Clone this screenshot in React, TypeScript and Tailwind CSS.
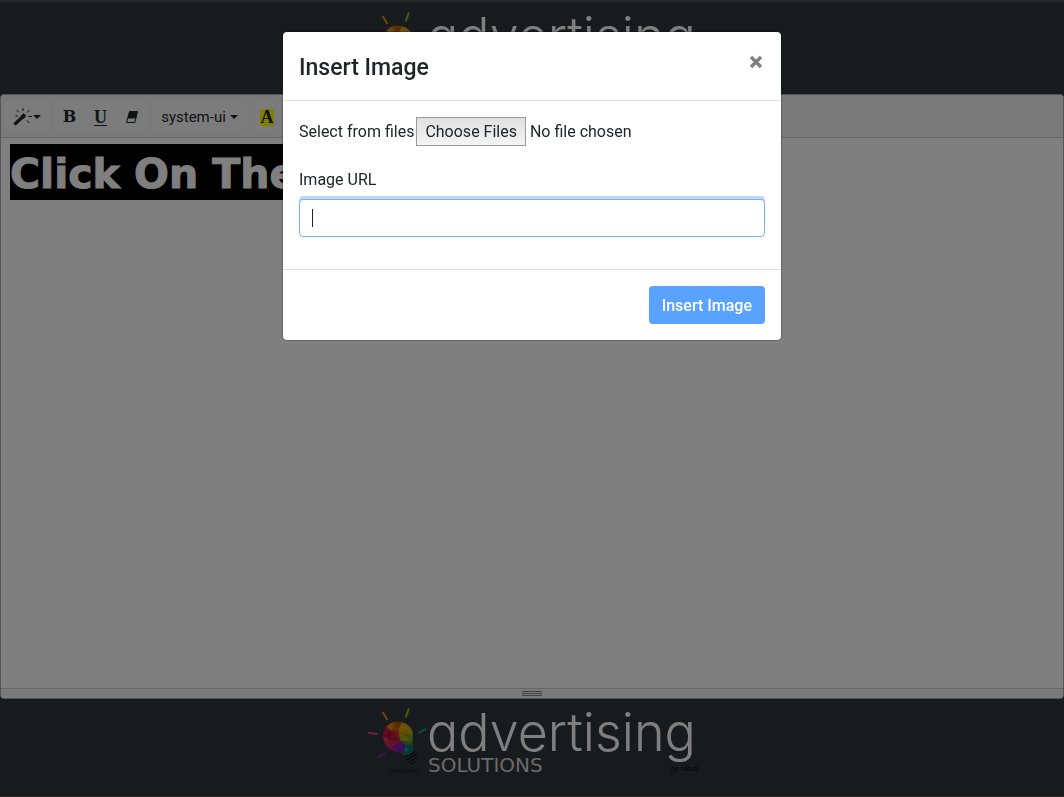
import type { ReactNode } from "react";

function Logo() {
  return (
    <svg viewBox="0 0 330 68" width="330" height="68" role="img" aria-label="advertising SOLUTIONS" className="shrink-0 overflow-visible">
      <g strokeWidth="2" fill="none">
        <path d="M0 24.7 9.5 26" stroke="#d84a78" />
        <path d="M14.7 4 19.3 12" stroke="#e08a16" />
        <path d="M41 .3 37.7 9.3" stroke="#8fae18" />
        <path d="M50 25.3 58.3 20.7" stroke="#128c8c" />
        <path d="M9.3 49.7 17.3 45" stroke="#7a2aa4" />
      </g>
      <ellipse cx="36" cy="62.7" rx="16" ry="2.4" fill="#262b30" />
      <path d="M36 48 46 43 50 50 48 54 43 56.500 39 54Z" fill="#1b1d20" />
      <path d="M37 51 47 45.500M38.500 53.500 48.500 48M41 56 49.500 51" stroke="#4b4f53" strokeWidth=".8" />
      <path d="M15 29 15.500 24 18 19 22 15.500 26 14 30 13.600 34 14.200 38 15.800 42 19 44.500 23.500 45 29 44.500 33 46 42 42 46 36.500 48 32 45 26 43.500 20 40 16.500 35Z" fill="#a31a3c" />
      <path d="M18 19 22 15.500 26 14 24 23Z" fill="#d48a12" />
      <path d="M26 14 30 13.600 34 14.200 30 22Z" fill="#b85606" />
      <path d="M26 14 30 22 24 23Z" fill="#cb6a0c" />
      <path d="M34 14.200 38 15.800 42 19 37 26 30 22Z" fill="#d9a50f" />
      <path d="M42 19 44.500 23.500 45 27 37 26Z" fill="#b8b414" />
      <path d="M45 27 44.500 34 37 26Z" fill="#76a51c" />
      <path d="M30 22 37 26 32 33Z" fill="#bf9b10" />
      <path d="M37 26 44.500 34 32 33Z" fill="#95ad1a" />
      <path d="M15 28 15.500 24 18 19 24 23Z" fill="#c81a50" />
      <path d="M24 23 30 22 32 33Z" fill="#d02a2a" />
      <path d="M15 28 24 23 22 32Z" fill="#a80f38" />
      <path d="M24 23 32 33 22 32Z" fill="#bc1634" />
      <path d="M15 28 22 32 17 36Z" fill="#d0385a" />
      <path d="M22 32 32 33 24 40 17 36Z" fill="#cd2350" />
      <path d="M32 33 38 36 36 44 32 45 28 44 24 40Z" fill="#7b1fb0" />
      <path d="M17 36 24 40 28 44 20 40Z" fill="#b0208a" />
      <path d="M32 33 44.500 34 44.500 39 38 37Z" fill="#3f8a34" />
      <path d="M38 37 44.500 37 46 42 42 46 36.500 48 34 45Z" fill="#0a7272" />
      <path d="M38 37 41 43 36 44Z" fill="#109595" />
      <text x="59" y="43" fontSize="52" fontWeight="300" fill="#fff" className="font-['Inter',sans-serif] [font-feature-settings:'cv11']">advertising</text>
      <text x="60" y="64" fontSize="20" fill="#d4d4d4" className="font-['DejaVu_Sans',sans-serif]">SOLUTIONS</text>
      <text x="303" y="63" fontSize="7" fill="#050505" className="font-['Liberation_Sans',sans-serif]">by naturl</text>
    </svg>
  );
}

function Caret() {
  return (
    <svg width="8" height="4" viewBox="0 0 8 4" aria-hidden="true">
      <path d="M0 0H8L4 4Z" fill="currentColor" />
    </svg>
  );
}

function ToolGroup({ children }: { children: ReactNode }) {
  return <div className="flex h-8 items-center rounded bg-[#f9f9f9]">{children}</div>;
}

function Toolbar() {
  return (
    <div role="toolbar" className="flex h-[43px] shrink-0 items-center gap-[5px] overflow-hidden border-b border-[#cfcfcf] bg-[#f4f4f4] px-1 pt-[2px] text-[#212529]">
      <ToolGroup>
        <button type="button" aria-label="Style" className="flex w-11 items-center justify-center">
          <svg width="20" height="20" viewBox="0 0 20 20" fill="none" stroke="currentColor" aria-hidden="true">
            <path d="M1.500 17.500 10 9.500" strokeWidth="3.200" />
            <path d="M9 10.500 12 7.500" strokeWidth="4" />
            <path d="M10 1V4M3.500 3 6 5.500M16.500 3 14 5.500M15.500 9.500H19M14 13.500 16.500 16M2.500 9H5" strokeWidth="1" />
          </svg>
          <Caret />
        </button>
      </ToolGroup>
      <ToolGroup>
        <button type="button" aria-label="Bold" className="w-[31px] font-['DejaVu_Serif',serif] text-base leading-6 font-bold">B</button>
        <button type="button" aria-label="Underline" className="w-[31px] font-['Liberation_Serif',serif] text-[18px] leading-6 font-bold underline underline-offset-2">U</button>
        <button type="button" aria-label="Remove font style" className="flex w-[31px] justify-center">
          <svg width="14" height="14" viewBox="0 0 14 14" aria-hidden="true">
            <path d="M4.500 1.500H12.500L9.800 12.500H1.500Z" fill="none" stroke="currentColor" strokeLinejoin="round" />
            <path d="M4.500 1.500H12.500L11 8.500H2.500Z" fill="currentColor" />
          </svg>
        </button>
      </ToolGroup>
      <ToolGroup>
        <button type="button" className="flex h-8 w-[95px] items-center justify-center gap-1 text-[15px]">
          system-ui
          <Caret />
        </button>
      </ToolGroup>
      <ToolGroup>
        <button type="button" aria-label="Recent color" className="ml-2 h-[17px] w-[14px] bg-[#ffff00] font-['Liberation_Serif',serif] text-[18px] leading-[17px] font-bold">
          A
        </button>
      </ToolGroup>
    </div>
  );
}

function InsertImageDialog() {
  return (
    <div className="fixed inset-0 flex items-start justify-center overflow-y-auto bg-black/50 px-4 pt-[31px]">
      <div role="dialog" aria-modal="true" aria-labelledby="dialog-title" className="w-full max-w-[500px] rounded-[5px] border border-black/20 bg-white bg-clip-padding text-[#212529]">
        <div className="flex h-[69px] items-center justify-between border-b border-[#dee2e6] px-4">
          <h4 id="dialog-title" className="pt-1 text-[23px] leading-9 font-medium">Insert Image</h4>
          <button type="button" aria-label="Close" className="mb-2 flex w-[18px] justify-center text-[#808080]">
            <svg width="14" height="14" viewBox="0 0 14 14" aria-hidden="true">
              <path d="M2 2 12 12M12 2 2 12" stroke="currentColor" strokeWidth="3.400" />
            </svg>
          </button>
        </div>
        <div className="px-4 pt-4 pb-8">
          <div className="flex items-center">
            <label htmlFor="files" className="pr-[2px]">Select from files</label>
            <input
              id="files"
              type="file"
              multiple
              className="min-w-0 flex-1 file:mr-1 file:h-[29px] file:border file:border-solid file:border-[#9b9b9b] file:bg-linear-to-b file:from-[#e0e0e0] file:to-[#f4f4f4] file:px-2 file:text-[#212529]"
            />
          </div>
          <label htmlFor="url" className="mt-[22px] mb-[7px] block leading-6">Image URL</label>
          <div className="relative">
            <input
              id="url"
              type="text"
              autoFocus
              className="block h-[38px] w-full rounded border border-[#76b1fb] bg-white px-3 caret-transparent shadow-[0_-3px_0_#bcd8ff] outline-none"
            />
            <span aria-hidden="true" className="absolute top-[10px] left-[13px] h-[18px] w-px bg-[#212529]" />
          </div>
        </div>
        <div className="flex justify-end border-t border-[#dee2e6] p-4">
          <button type="button" className="h-[38px] rounded bg-[#59a2ff] px-[13px] pt-px font-medium text-white">Insert Image</button>
        </div>
      </div>
    </div>
  );
}

export default function App() {
  return (
    <div className="flex min-h-screen flex-col bg-[#2f373c] font-['Roboto',sans-serif] text-base">
      <header className="flex h-[94px] shrink-0 justify-center border-t-2 border-[#555555] pt-[10px] pl-[2px]">
        <Logo />
      </header>
      <main className="flex flex-1 flex-col overflow-hidden rounded border border-[#a9a9a9] bg-white">
        <Toolbar />
        <div contentEditable suppressContentEditableWarning className="flex-1 p-[9px] pt-[6px] outline-none">
          <h1 className="font-['DejaVu_Sans',sans-serif] text-[41px] leading-[52px] font-bold text-white">
            <span className="inline-block bg-black pt-1 pr-2 [-webkit-text-stroke:1px_#fff]">Click On The</span>
          </h1>
        </div>
        <div className="flex h-[10px] shrink-0 flex-col items-center justify-center gap-px border-t border-[#cfcfcf] bg-[#f4f4f4]">
          <span className="h-px w-5 bg-[#888888]" />
          <span className="h-px w-5 bg-[#888888]" />
          <span className="h-px w-5 bg-[#888888]" />
        </div>
      </main>
      <footer className="flex h-[98px] shrink-0 justify-center border-b border-[#555555] pt-[9px] pl-[2px]">
        <Logo />
      </footer>
      <InsertImageDialog />
    </div>
  );
}
